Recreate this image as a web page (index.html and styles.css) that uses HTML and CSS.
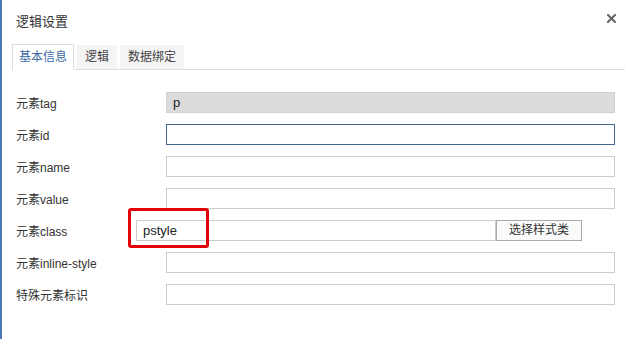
FILE: index.html
```html
<!DOCTYPE html>
<html lang="zh">
<head>
<meta charset="utf-8">
<title>逻辑设置</title>
<link rel="stylesheet" href="styles.css">
</head>
<body>
<div class="dialog">
  <div class="header">
    <span class="title">逻辑设置</span>
    <svg class="close" width="9" height="9" viewBox="0 0 9 9" aria-label="关闭"><path d="M1 1 L8 8 M8 1 L1 8" stroke="#666" stroke-width="2" stroke-linecap="square" fill="none"/></svg>
  </div>
  <div class="tabs">
    <div class="tab active">基本信息</div>
    <div class="tab">逻辑</div>
    <div class="tab">数据绑定</div>
  </div>
  <div class="form">
    <div class="row">
      <label class="label">元素tag</label>
      <div class="input readonly">p</div>
    </div>
    <div class="row">
      <label class="label">元素id</label>
      <div class="input focus"></div>
    </div>
    <div class="row">
      <label class="label">元素name</label>
      <div class="input"></div>
    </div>
    <div class="row">
      <label class="label">元素value</label>
      <div class="input"></div>
    </div>
    <div class="row row-class">
      <label class="label narrow">元素class</label>
      <div class="input class-input">pstyle<span class="highlight"></span></div>
      <div class="btn">选择样式类</div>
    </div>
    <div class="row">
      <label class="label">元素inline-style</label>
      <div class="input"></div>
    </div>
    <div class="row">
      <label class="label">特殊元素标识</label>
      <div class="input"></div>
    </div>
  </div>
</div>
</body>
</html>
```

FILE: styles.css
```css
* { box-sizing: border-box; }
html, body {
  margin: 0;
  padding: 0;
  background: #fff;
}
body {
  font-family: "Liberation Sans", "Noto Sans CJK SC", sans-serif;
  font-size: 12px;
  color: #333;
}
.dialog {
  width: 625px;
  height: 339px;
  border-left: 2px solid #4a78b2;
  background: #fff;
}
.header {
  height: 40px;
  display: flex;
  align-items: center;
  justify-content: space-between;
  padding: 0 9px 0 14px;
}
.title {
  font-size: 13px;
  color: #333;
}
.close {
  display: block;
  margin-top: -4px;
}
.tabs {
  margin-top: 4px;
  margin-left: 10px;
  display: flex;
  gap: 3px;
  height: 26px;
  border-bottom: 1px solid #ddd;
  align-items: flex-end;
}
.tab {
  height: 24px;
  line-height: 24px;
  padding: 0 8px;
  background: #f4f4f4;
  color: #444;
}
.tab.active {
  height: 26px;
  line-height: 25px;
  padding: 0 6px;
  border: 1px solid #ddd;
  border-bottom-color: #fff;
  margin-bottom: -1px;
  background: #fff;
  color: #3b6aa6;
}
.form {
  padding: 22px 10px 0 14px;
  display: flex;
  flex-direction: column;
  gap: 11px;
}
.row {
  display: flex;
  align-items: center;
  height: 21px;
}
.label {
  width: 150px;
  flex: none;
  font-size: 12px;
  color: #333;
}
.label.narrow {
  width: 120px;
}
.input {
  position: relative;
  width: 450px;
  height: 21px;
  border: 1px solid #ccc;
  background: #fff;
  padding: 0 6px;
  line-height: 19px;
  font-size: 13px;
  color: #222;
}
.input.readonly {
  background: #dcdcdc;
  border-color: #d0d0d0;
}
.input.focus {
  border-color: #3f6690;
}
.input.class-input {
  width: 360px;
}
.btn {
  width: 86px;
  height: 21px;
  border: 1px solid #aaa;
  background: #fafafa;
  text-align: center;
  line-height: 19px;
  font-size: 12px;
  color: #333;
}
.highlight {
  position: absolute;
  left: -9px;
  top: -13px;
  width: 81px;
  height: 40px;
  border: 3px solid #e0000a;
  border-radius: 3px;
}
```
